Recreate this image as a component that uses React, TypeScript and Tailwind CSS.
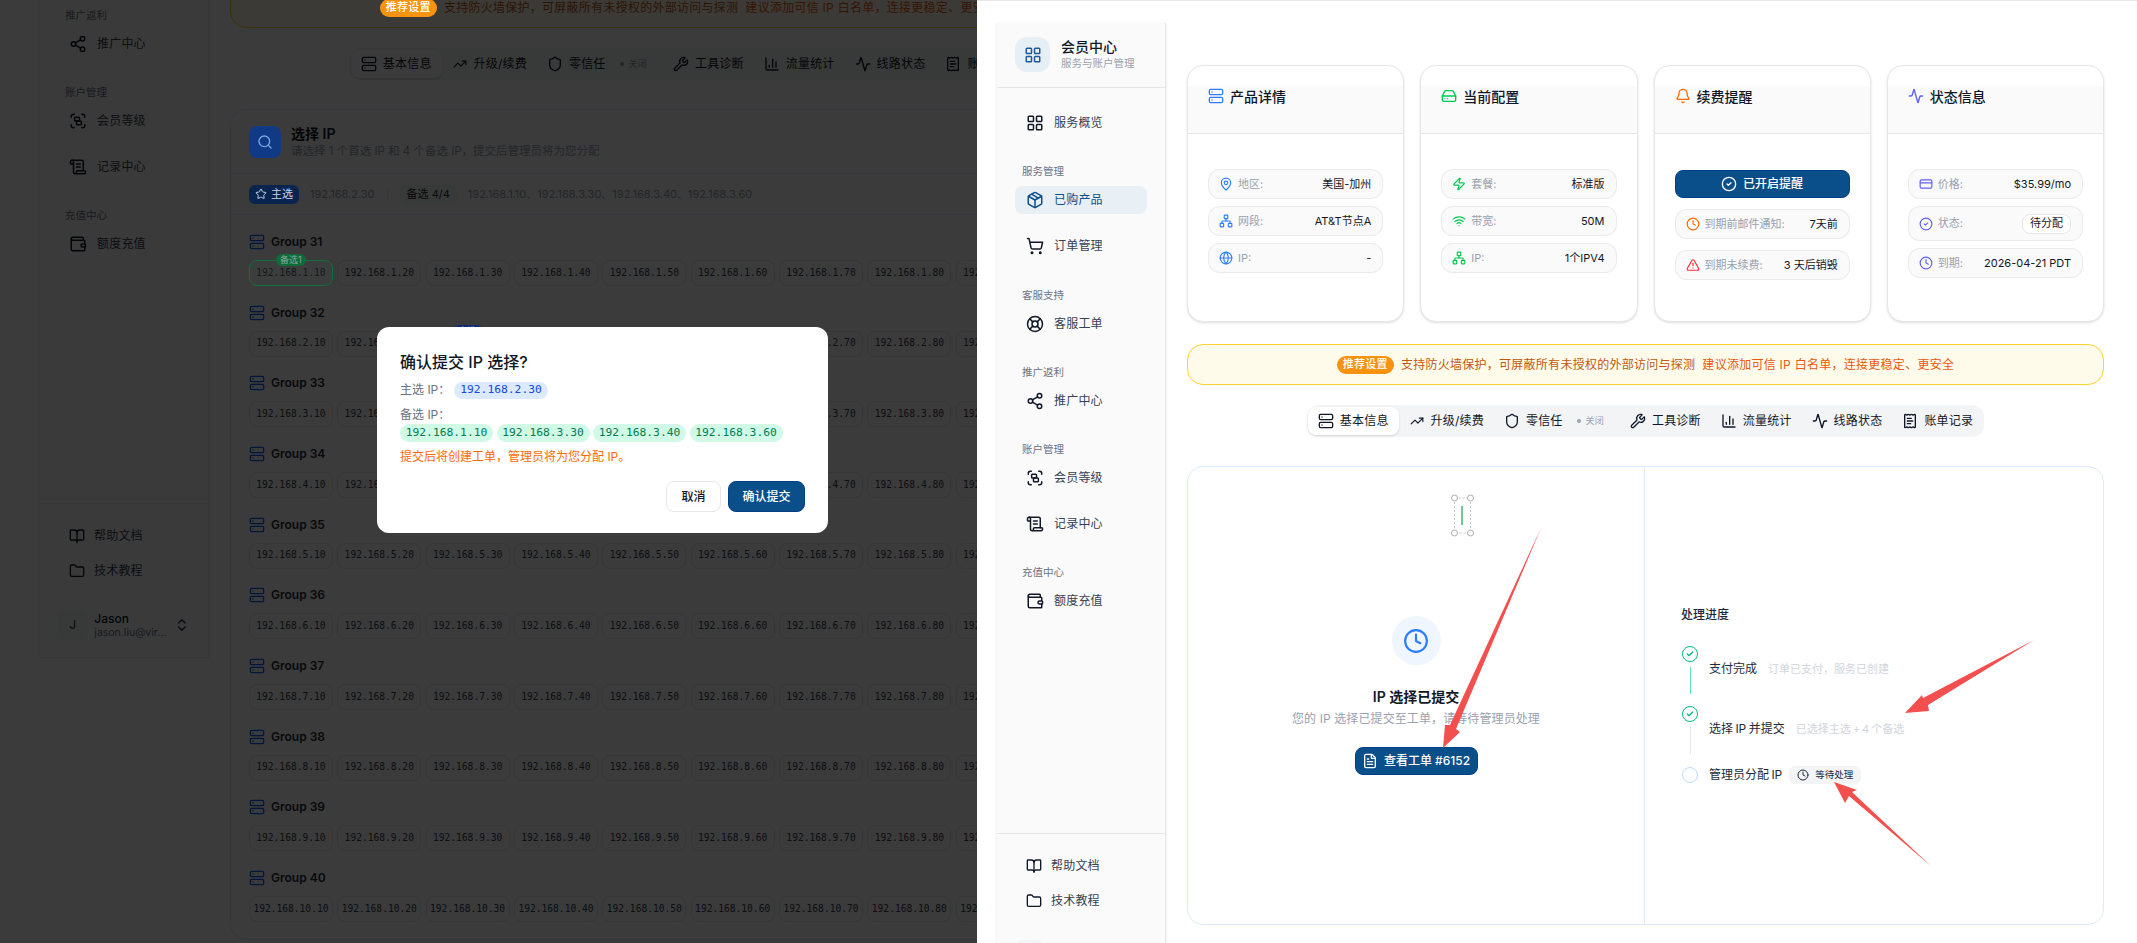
import React from "react";
import {
  Activity, Bell, BookOpen, ChartColumn, Check, ChevronsUpDown, CircleCheck, Clock, CreditCard, FileText, Folder,
  Globe, HardDrive, LayoutGrid, LifeBuoy, MapPin, Network, Package, ReceiptText, ScrollText, Search, Server, Share2,
  Shield, ShoppingCart, Star, TrendingUp, TriangleAlert, Wallet, Wifi, Wrench, Zap,
} from "lucide-react";

const ScanLevel = ({ size = 18 }: { size?: number }) => (
  <svg width={size} height={size} viewBox="0 0 24 24" fill="none" stroke="currentColor" strokeWidth={2} strokeLinecap="round" strokeLinejoin="round">
    <path d="M7 3H6a3 3 0 0 0-3 3v1M17 3h1a3 3 0 0 1 3 3v1M21 17v1a3 3 0 0 1-3 3h-1M7 21H6a3 3 0 0 1-3-3v-1" />
    <rect x="7.5" y="7" width="6.5" height="5" rx="1" />
    <rect x="10" y="12" width="6.5" height="5" rx="1" />
  </svg>
);

const navSections = [
  { items: [{ label: "服务概览", icon: <LayoutGrid size={18} /> }] },
  { title: "服务管理", items: [{ label: "已购产品", icon: <Package size={18} />, active: true }, { label: "订单管理", icon: <ShoppingCart size={18} /> }] },
  { title: "客服支持", items: [{ label: "客服工单", icon: <LifeBuoy size={18} /> }] },
  { title: "推广返利", items: [{ label: "推广中心", icon: <Share2 size={18} /> }] },
  { title: "账户管理", items: [{ label: "会员等级", icon: <ScanLevel /> }, { label: "记录中心", icon: <ScrollText size={18} /> }] },
  { title: "充值中心", items: [{ label: "额度充值", icon: <Wallet size={18} /> }] },
];

function Sidebar({ heightClass }: { heightClass: string }) {
  return (
    <aside className={`w-[169px] shrink-0 flex flex-col bg-[#fafafa] border-r border-gray-200 shadow-sm ${heightClass}`}>
      <div className="h-[65px] shrink-0 flex items-start gap-[11px] pl-[18px] pt-[14px] border-b border-gray-200">
        <div className="w-[35px] h-[35px] rounded-xl bg-[#e6eef6] flex items-center justify-center text-[#1d5a9a]">
          <LayoutGrid size={18} />
        </div>
        <div>
          <div className="text-[14px] leading-[20px] font-medium text-gray-900">会员中心</div>
          <div className="text-[10.5px] leading-[14px] text-gray-400">服务与账户管理</div>
        </div>
      </div>
      <nav className="flex-1 flex flex-col gap-[28.3px] pt-[21px] px-[18px]">
        {navSections.map((section, i) => (
          <div key={i} className="flex flex-col">
            {section.title && <div className="h-[14px] mb-[7px] pl-[7px] text-[10.5px] leading-[14px] text-gray-500">{section.title}</div>}
            <div className="flex flex-col gap-[18px]">
              {section.items.map((item: any) => (
                <div
                  key={item.label}
                  className={`h-[28px] flex items-center gap-[10px] pl-[11px] rounded-lg text-[12px] tracking-[0.2px] ${item.active ? "bg-[#e8eff5] text-[#0b4f8a]" : "text-gray-700"}`}
                >
                  <span className={item.active ? "text-[#0b4f8a]" : "text-gray-900"}>{item.icon}</span>
                  {item.label}
                </div>
              ))}
            </div>
          </div>
        ))}
      </nav>
      <div className="shrink-0 h-[154px] border-t border-gray-200 pt-[18px] px-[18px]">
        <div className="flex flex-col gap-[7px]">
          <div className="h-[28px] flex items-center gap-[9px] pl-[11px] text-[12px] tracking-[0.2px] text-gray-700">
            <BookOpen size={16} className="text-gray-900" /> 帮助文档
          </div>
          <div className="h-[28px] flex items-center gap-[9px] pl-[11px] text-[12px] tracking-[0.2px] text-gray-700">
            <Folder size={16} className="text-gray-900" /> 技术教程
          </div>
        </div>
        <div className="mt-[25px] flex items-center">
          <div className="w-[30px] h-[30px] rounded-lg bg-gray-100 flex items-center justify-center text-[12px] text-gray-800">J</div>
          <div className="ml-[7px] w-[75px]">
            <div className="text-[12px] leading-[15px] font-medium text-gray-900">Jason</div>
            <div className="text-[10.5px] leading-[14px] text-gray-500 truncate">jason.liu@virc...</div>
          </div>
          <ChevronsUpDown size={16} className="ml-[5px] text-gray-800" />
        </div>
      </div>
    </aside>
  );
}

function InfoRow({ icon, label, value, badge }: { icon: React.ReactNode; label: string; value: string; badge?: boolean }) {
  return (
    <div className={`flex items-center rounded-xl border border-gray-200/80 bg-[#fafafa] pl-[10px] pr-[11px] ${badge ? "h-[35px]" : "h-[30px]"}`}>
      <span className="w-[14px] mr-[5px] flex justify-center">{icon}</span>
      <span className="text-[11px] text-gray-400">{label}</span>
      {badge ? (
        <span className="ml-auto px-[7px] h-[20px] flex items-center rounded-lg border border-gray-200 bg-white text-[11px] text-gray-900">{value}</span>
      ) : (
        <span className="ml-auto text-[11px] text-gray-900 whitespace-nowrap">{value}</span>
      )}
    </div>
  );
}

function InfoCard({ icon, title, children, bodyClass }: { icon: React.ReactNode; title: string; children: React.ReactNode; bodyClass: string }) {
  return (
    <div className="h-[257px] rounded-2xl border border-gray-200 bg-white shadow-sm overflow-hidden pt-[20px]">
      <div className="h-[48px] bg-[#fafafa] border-b border-gray-200 px-[20px]">
        <div className="h-[20px] flex items-center gap-[6px] text-[14px] font-medium text-gray-900">
          {icon}
          {title}
        </div>
      </div>
      <div className={`px-[20px] flex flex-col ${bodyClass}`}>{children}</div>
    </div>
  );
}

const tabs = [
  { label: "升级/续费", icon: <TrendingUp size={14} className="mx-px" /> },
  { label: "零信任", icon: <Shield size={16} />, off: true },
  { label: "工具诊断", icon: <Wrench size={16} /> },
  { label: "流量统计", icon: <ChartColumn size={16} /> },
  { label: "线路状态", icon: <Activity size={16} /> },
  { label: "账单记录", icon: <ReceiptText size={16} /> },
];

function ProductOverview() {
  return (
    <>
      <div className="grid grid-cols-4 gap-4">
        <InfoCard icon={<Server size={16} className="text-blue-500" />} title="产品详情" bodyClass="pt-[35px] gap-[7px]">
          <InfoRow icon={<MapPin size={14} className="text-blue-500" />} label="地区:" value="美国-加州" />
          <InfoRow icon={<Network size={14} className="text-blue-500" />} label="网段:" value="AT&T节点A" />
          <InfoRow icon={<Globe size={14} className="text-blue-500" />} label="IP:" value="-" />
        </InfoCard>
        <InfoCard icon={<HardDrive size={16} className="text-green-500" />} title="当前配置" bodyClass="pt-[35px] gap-[7px]">
          <InfoRow icon={<Zap size={14} className="text-green-500" />} label="套餐:" value="标准版" />
          <InfoRow icon={<Wifi size={14} className="text-green-500" />} label="带宽:" value="50M" />
          <InfoRow icon={<Network size={14} className="text-green-500" />} label="IP:" value="1个IPV4" />
        </InfoCard>
        <InfoCard icon={<Bell size={16} className="text-orange-500" />} title="续费提醒" bodyClass="pt-[36px] gap-[11px]">
          <div className="h-[28px] rounded-lg bg-[#0b4f8a] border border-[#063f86] flex items-center justify-center gap-[6px] text-[12px] font-medium text-white">
            <CircleCheck size={16} /> 已开启提醒
          </div>
          <InfoRow icon={<Clock size={14} className="text-orange-500" />} label="到期前邮件通知:" value="7天前" />
          <InfoRow icon={<TriangleAlert size={14} className="text-red-500" />} label="到期未续费:" value="3 天后销毁" />
        </InfoCard>
        <InfoCard icon={<Activity size={16} className="text-indigo-500" />} title="状态信息" bodyClass="pt-[35px] gap-[7px]">
          <InfoRow icon={<CreditCard size={14} className="text-indigo-500" />} label="价格:" value="$35.99/mo" />
          <InfoRow icon={<CircleCheck size={14} className="text-indigo-500" />} label="状态:" value="待分配" badge />
          <InfoRow icon={<Clock size={14} className="text-indigo-500" />} label="到期:" value="2026-04-21 PDT" />
        </InfoCard>
      </div>

      <div className="mt-[22px] h-[41px] rounded-2xl border border-amber-300 bg-[#fffbeb] flex items-center justify-center text-[12px] tracking-[0.27px]">
        <span className="relative z-20 h-[18px] px-[6px] mr-[7px] rounded-full bg-[#f7930f] text-white text-[11px] font-medium flex items-center">推荐设置</span>
        <span className="text-[#c2570c]">支持防火墙保护，可屏蔽所有未授权的外部访问与探测</span>
        <span className="ml-[7px] text-[#ea580c]">建议添加可信 IP 白名单，连接更稳定、更安全</span>
      </div>

      <div className="mt-[20px] flex justify-center">
        <div className="h-[32px] flex items-center px-[1px] rounded-xl bg-gray-100 text-[12px] tracking-[0.2px] text-gray-900">
          <div className="h-[28px] flex items-center gap-1.5 px-2.5 rounded-lg bg-white shadow-sm">
            <Server size={16} /> 基本信息
          </div>
          {tabs.map((t) => (
            <div key={t.label} className="h-[28px] flex items-center gap-1.5 px-2.5">
              {t.icon}
              {t.label}
              {t.off && (
                <span className="ml-2 mr-1.5 flex items-center gap-[5px] text-[9px] text-gray-400">
                  <span className="w-1 h-1 rounded-full bg-gray-400" />
                  关闭
                </span>
              )}
            </div>
          ))}
        </div>
      </div>
    </>
  );
}

const Dot = ({ done }: { done: boolean }) =>
  done ? (
    <div className="w-4 h-4 rounded-full border-[1.5px] border-emerald-500 flex items-center justify-center text-emerald-500">
      <Check size={8} strokeWidth={4} />
    </div>
  ) : (
    <div className="w-4 h-4 rounded-full border-[1.5px] border-blue-200" />
  );

function SubmittedPanel() {
  return (
    <div className="mt-[29px] h-[459px] rounded-2xl border border-blue-100 bg-white flex">
      <div className="w-[457px] shrink-0 border-r border-blue-100 flex flex-col items-center justify-center">
        <div className="w-[49px] h-[49px] rounded-full bg-blue-50 flex items-center justify-center text-blue-500">
          <Clock size={26} />
        </div>
        <div className="mt-[22px] text-[14px] leading-[20px] font-semibold text-gray-900">IP 选择已提交</div>
        <div className="mt-[3px] text-[12px] leading-[18px] tracking-[0.1px] text-gray-400">您的 IP 选择已提交至工单，请等待管理员处理</div>
        <div className="mt-[19px] h-[28px] w-[123px] rounded-lg bg-[#0b4f8a] border border-[#063f86] flex items-center justify-center gap-[6px] text-[12px] font-medium text-white">
          <FileText size={16} /> 查看工单 #6152
        </div>
      </div>
      <div className="flex-1 pl-[36px] flex flex-col justify-center">
        <div className="text-[12px] leading-[16px] font-medium text-gray-800 mb-[23px]">处理进度</div>
        <div className="flex gap-[10px] h-[60px]">
          <div className="w-[18px] flex flex-col items-center">
            <Dot done />
            <div className="mt-[5px] w-px h-[27px] bg-emerald-300" />
          </div>
          <div className="pt-[15px] flex items-center h-[31px] text-[12px] text-gray-800">
            支付完成
            <span className="ml-[11px] text-[11px] text-gray-300">订单已支付，服务已创建</span>
          </div>
        </div>
        <div className="flex gap-[10px] h-[60px]">
          <div className="w-[18px] flex flex-col items-center">
            <Dot done />
            <div className="mt-[5px] w-px h-[27px] bg-gray-200" />
          </div>
          <div className="pt-[15px] flex items-center h-[31px] text-[12px] text-gray-800 [word-spacing:-1px]">
            选择 IP 并提交
            <span className="ml-[11px] text-[11px] text-gray-300">已选择主选 + 4 个备选</span>
          </div>
        </div>
        <div className="flex gap-[10px] items-center">
          <div className="w-[18px] flex justify-center">
            <Dot done={false} />
          </div>
          <div className="flex items-center text-[12px] text-gray-800 [word-spacing:-1px]">
            管理员分配 IP
            <span className="ml-[7px] h-[18px] w-[72px] rounded-md bg-gray-100 flex items-center justify-center gap-[6px] text-[9.5px] text-gray-800">
              <Clock size={12} /> 等待处理
            </span>
          </div>
        </div>
      </div>
    </div>
  );
}

const selected: Record<string, { tag: string; kind: "backup" | "main" }> = {
  "192.168.1.10": { tag: "备选1", kind: "backup" },
  "192.168.2.30": { tag: "主选", kind: "main" },
  "192.168.3.30": { tag: "备选2", kind: "backup" },
  "192.168.3.40": { tag: "备选3", kind: "backup" },
  "192.168.3.60": { tag: "备选4", kind: "backup" },
};

function IpGroup({ n }: { n: number }) {
  return (
    <div className="h-[70.67px]">
      <div className="h-[20px] flex items-center gap-[6px] text-[12px] font-semibold text-gray-800">
        <Server size={16} className="text-blue-600" /> Group {30 + n}
      </div>
      <div className="mt-2 grid grid-cols-10 gap-[4.5px]">
        {Array.from({ length: 10 }, (_, i) => {
          const ip = `192.168.${n}.${(i + 1) * 10}`;
          const sel = selected[ip];
          return (
            <div
              key={ip}
              className={`relative h-[26px] rounded-lg border flex items-center justify-center [font-family:'DejaVu_Sans_Mono',monospace] text-[9.6px] ${
                sel
                  ? sel.kind === "main"
                    ? "z-20 border-[#123a90] bg-[#3b3d42] text-[#15171c]"
                    : "z-20 border-[#12703c] bg-[#3b3e3c] text-[#15171c]"
                  : "border-gray-200 bg-white text-gray-700"
              }`}
            >
              {sel && (
                <span
                  className={`absolute -top-[7px] left-1/2 -translate-x-1/2 h-[12px] w-[30px] rounded-full flex items-center justify-center text-[9px] text-[#8aa895] [font-family:Inter,'Noto_Sans_CJK_SC',sans-serif] ${
                    sel.kind === "main" ? "bg-[#0c2a78]" : "bg-[#0f6b3a]"
                  }`}
                >
                  {sel.tag}
                </span>
              )}
              {ip}
            </div>
          );
        })}
      </div>
    </div>
  );
}

function SelectPanel() {
  return (
    <div className="mt-[29px] rounded-2xl border border-blue-100 bg-white">
      <div className="h-[64px] flex items-center gap-[10px] px-[18px] border-b border-blue-100">
        <div className="relative z-20 w-8 h-8 rounded-lg bg-[#103a85] flex items-center justify-center text-[#7ea6e0]">
          <Search size={16} />
        </div>
        <div>
          <div className="text-[14px] leading-[18px] font-semibold text-gray-900">选择 IP</div>
          <div className="text-[11.5px] leading-[16px] text-gray-400">请选择 1 个首选 IP 和 4 个备选 IP，提交后管理员将为您分配</div>
        </div>
      </div>
      <div className="h-[41px] flex items-center px-[18px] border-b border-blue-100 text-[11px] text-gray-400">
        <span className="relative z-20 h-[19px] w-[50px] rounded-md bg-[#0a2450] text-[#c8d4e8] flex items-center justify-center gap-1 text-[11px]">
          <Star size={12} /> 主选
        </span>
        <span className="ml-[11px]">192.168.2.30</span>
        <span className="mx-[12px] w-px h-3 bg-gray-200" />
        <span className="h-[19px] px-[7px] rounded-md bg-gray-100 flex items-center text-gray-800">备选 4/4</span>
        <span className="ml-[11px]">192.168.1.10、192.168.3.30、192.168.3.40、192.168.3.60</span>
      </div>
      <div className="px-[18px] pt-[17px]">
        {Array.from({ length: 10 }, (_, i) => (
          <IpGroup key={i} n={i + 1} />
        ))}
      </div>
    </div>
  );
}

function Page({ sidebarHeight, children }: { sidebarHeight: string; children: React.ReactNode }) {
  return (
    <div className="w-[1160px] flex pl-5 pt-[22px]">
      <Sidebar heightClass={sidebarHeight} />
      <main className="w-[917px] shrink-0 ml-[21px] pt-[42px]">
        <ProductOverview />
        {children}
      </main>
    </div>
  );
}

function ConfirmDialog() {
  return (
    <div className="absolute z-30 left-[377px] top-[327px] w-[451px] h-[206px] rounded-xl bg-white px-[23px] pt-[24px]">
      <div className="text-[16px] leading-[22px] font-medium text-gray-900">确认提交 IP 选择?</div>
      <div className="mt-2 flex items-center text-[12px] text-gray-500">
        <span className="w-[54px]">主选 IP：</span>
        <span className="h-[17px] w-[94px] rounded-full bg-blue-100 text-blue-700 flex items-center justify-center [font-family:'DejaVu_Sans_Mono',monospace] text-[11.3px]">192.168.2.30</span>
      </div>
      <div className="mt-2 text-[12px] leading-[16px] text-gray-500">备选 IP：</div>
      <div className="mt-px flex gap-[3.5px]">
        {["192.168.1.10", "192.168.3.30", "192.168.3.40", "192.168.3.60"].map((ip) => (
          <span key={ip} className="h-[18px] w-[93px] rounded-full bg-emerald-100 text-emerald-700 flex items-center justify-center [font-family:'DejaVu_Sans_Mono',monospace] text-[11.3px]">
            {ip}
          </span>
        ))}
      </div>
      <div className="mt-[7px] text-[12px] leading-[16px] text-orange-500">提交后将创建工单，管理员将为您分配 IP。</div>
      <div className="mt-4 flex justify-end gap-[7px]">
        <span className="h-[31px] w-[55px] rounded-lg border border-gray-200 bg-white flex items-center justify-center text-[12px] font-medium text-gray-900">取消</span>
        <span className="h-[31px] w-[77px] rounded-lg bg-[#0b4f8a] border border-[#063f86] flex items-center justify-center text-[12px] font-medium text-white">确认提交</span>
      </div>
    </div>
  );
}

// red review arrows and the stray selection handles drawn on top of the screenshot
function Annotations() {
  return (
    <svg className="absolute inset-0 z-40 pointer-events-none" width={2137} height={943} viewBox="0 0 2137 943">
      <g fill="#f44f4f">
        <polygon points="1541,528 1456,729 1460,732 1443,748 1445,725 1450,725" />
        <polygon points="2034,640 1928,705 1929,711 1905,713 1922,695 1923,698" />
        <polygon points="1932,867 1849,796 1845,803 1834,782 1857,790 1852,792" />
      </g>
      <rect x="1454.5" y="498" width="16" height="35" fill="none" stroke="#b5b5b5" strokeWidth="0.8" strokeDasharray="2 2" />
      <line x1="1462" y1="506" x2="1462" y2="525" stroke="#16a34a" strokeWidth="1.2" />
      {[[1454.5, 498], [1470.5, 498], [1454.5, 533], [1470.5, 533]].map(([cx, cy]) => (
        <circle key={`${cx}-${cy}`} cx={cx} cy={cy} r="3" fill="#fff" stroke="#999" strokeWidth="0.8" />
      ))}
    </svg>
  );
}

export default function App() {
  return (
    <div className="relative w-[2137px] h-[943px] overflow-hidden flex bg-white [font-family:Inter,'Noto_Sans_CJK_SC',sans-serif]">
      <div className="relative w-[977px] h-full shrink-0 overflow-hidden bg-white">
        <div className="-mt-[356px] ml-5">
          <Page sidebarHeight="h-[991px]">
            <SelectPanel />
          </Page>
        </div>
        <div className="absolute inset-0 z-10 bg-black/[0.77]" />
        <ConfirmDialog />
      </div>
      <div className="flex-1 h-full overflow-hidden border-t border-gray-200">
        <div className="-mt-px">
          <div className="pt-px">
            <Page sidebarHeight="h-[964px]">
              <SubmittedPanel />
            </Page>
          </div>
        </div>
      </div>
      <Annotations />
    </div>
  );
}
